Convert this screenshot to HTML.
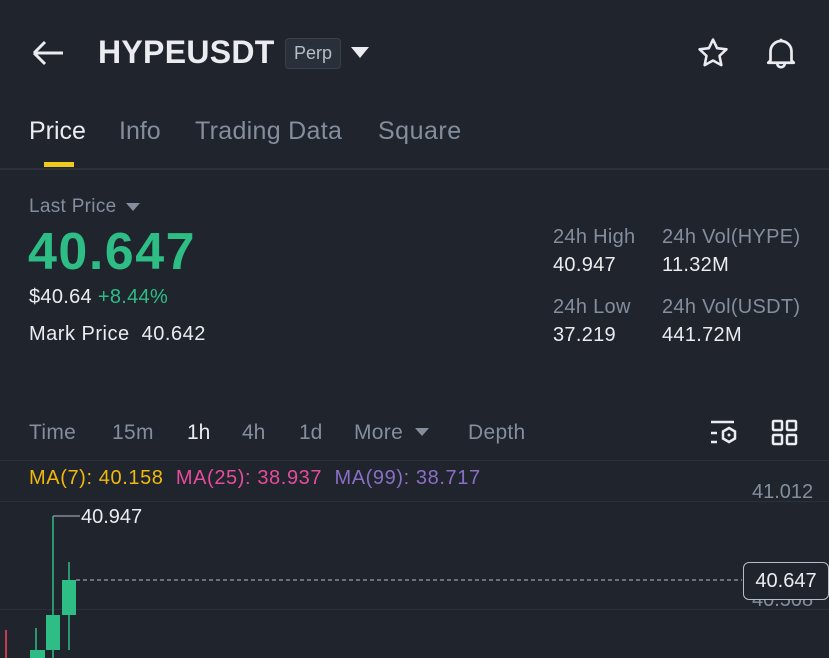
<!DOCTYPE html><html><head><style>
body{margin:0;width:829px;height:658px;overflow:hidden;background:#1f242d;font-family:"Liberation Sans",sans-serif;position:relative}
.a{position:absolute;white-space:nowrap}
.g{color:#848e9c}
.s{font-size:20px;letter-spacing:0.3px}
</style></head><body>
<svg class="a" style="left:30px;top:38px" width="36" height="30" viewBox="0 0 36 30"><path d="M4 15H33M4 15L15 4M4 15L15 26" stroke="#eaecef" stroke-width="3" fill="none"/></svg>
<div class="a" style="left:98px;top:34px;font-size:32px;font-weight:bold;color:#eaecef;letter-spacing:0.3px">HYPEUSDT</div>
<div class="a" style="left:285px;top:38px;width:54px;height:29px;border:1px solid #3a404a;border-radius:4px;background:#2a303a;color:#b7bdc6;font-size:18px;text-align:center;line-height:29px">Perp</div>
<svg class="a" style="left:350px;top:46px" width="20" height="14"><path d="M1 1H19L10 12Z" fill="#eaecef"/></svg>
<svg class="a" style="left:695px;top:36px" width="36" height="34" viewBox="0 0 24 24"><path d="M12 2.5l2.9 6.1 6.6.8-4.9 4.6 1.3 6.6L12 17.3l-5.9 3.3 1.3-6.6L2.5 9.4l6.6-.8z" stroke="#eaecef" stroke-width="1.8" fill="none" stroke-linejoin="round"/></svg>
<svg class="a" style="left:762px;top:35px" width="38" height="36" viewBox="0 0 24 24"><path d="M5 17V11a7 7 0 0114 0v6l1.5 1.5h-17zM12 2.5v1.5M9.5 19a2.5 2.5 0 005 0" stroke="#eaecef" stroke-width="1.8" fill="none" stroke-linejoin="round"/></svg>
<div class="a" style="left:29px;top:117px;font-size:25px;color:#eaecef">Price</div>
<div class="a g" style="left:119px;top:117px;font-size:25px">Info</div>
<div class="a g" style="left:195px;top:117px;font-size:25px;letter-spacing:0.3px">Trading Data</div>
<div class="a g" style="left:378px;top:117px;font-size:25px;letter-spacing:0.5px">Square</div>
<div class="a" style="left:44px;top:162px;width:30px;height:5px;background:#f0c91d"></div>
<div class="a" style="left:0;top:168px;width:829px;height:2px;background:#2b3139"></div>
<div class="a g" style="left:29px;top:196px;font-size:19px;letter-spacing:0.3px">Last Price</div>
<svg class="a" style="left:126px;top:203px" width="14" height="9"><path d="M0 0H14L7 8Z" fill="#848e9c"/></svg>
<div class="a" style="left:28px;top:222px;font-size:52px;font-weight:bold;color:#2ebd85;letter-spacing:1.5px">40.647</div>
<div class="a s" style="left:29px;top:286px;color:#eaecef">$40.64 <span style="color:#2ebd85">+8.44%</span></div>
<div class="a s" style="left:29px;top:323px;color:#eaecef;letter-spacing:0.5px">Mark Price&nbsp; 40.642</div>
<div class="a g s" style="left:553px;top:226px">24h High</div>
<div class="a s" style="left:553px;top:254px;color:#eaecef">40.947</div>
<div class="a g s" style="left:662px;top:226px">24h Vol(HYPE)</div>
<div class="a s" style="left:662px;top:254px;color:#eaecef">11.32M</div>
<div class="a g s" style="left:553px;top:296px">24h Low</div>
<div class="a s" style="left:553px;top:324px;color:#eaecef">37.219</div>
<div class="a g s" style="left:662px;top:296px">24h Vol(USDT)</div>
<div class="a s" style="left:662px;top:324px;color:#eaecef">441.72M</div>
<div class="a g" style="left:29px;top:421px;font-size:21px;letter-spacing:0.3px">Time</div>
<div class="a g" style="left:112px;top:421px;font-size:21px;letter-spacing:0.3px">15m</div>
<div class="a" style="left:187px;top:421px;font-size:21px;color:#eaecef">1h</div>
<div class="a g" style="left:242px;top:421px;font-size:21px">4h</div>
<div class="a g" style="left:299px;top:421px;font-size:21px">1d</div>
<div class="a g" style="left:354px;top:421px;font-size:21px;letter-spacing:0.3px">More</div>
<svg class="a" style="left:415px;top:428px" width="14" height="9"><path d="M0 0H14L7 8Z" fill="#848e9c"/></svg>
<div class="a g" style="left:468px;top:421px;font-size:21px;letter-spacing:0.3px">Depth</div>
<svg class="a" style="left:708px;top:418px" width="34" height="30"><path d="M3 4H26M3 15H9M3 24H9" stroke="#eaecef" stroke-width="2.5"/><path d="M21 10l6 3.5v7l-6 3.5-6-3.5v-7z" stroke="#eaecef" stroke-width="2.5" fill="none"/><circle cx="21" cy="17" r="1.5" fill="#eaecef"/></svg>
<svg class="a" style="left:771px;top:419px" width="28" height="28"><g stroke="#eaecef" stroke-width="2.5" fill="none"><rect x="2" y="2" width="9" height="9" rx="1"/><rect x="16" y="2" width="9" height="9" rx="1"/><rect x="2" y="16" width="9" height="9" rx="1"/><rect x="16" y="16" width="9" height="9" rx="1"/></g></svg>
<div class="a" style="left:0;top:460px;width:829px;height:1px;background:#2b3139"></div>
<div class="a" style="left:29px;top:467px;font-size:20px;letter-spacing:0.6px"><span style="color:#f0b90b">MA(7): 40.158</span>&nbsp; <span style="color:#e64c9c">MA(25): 38.937</span>&nbsp; <span style="color:#8a6fc4">MA(99): 38.717</span></div>
<div class="a g" style="left:752px;top:481px;font-size:20px">41.012</div>
<div class="a" style="left:0;top:501px;width:829px;height:1px;background:#2b3139"></div>
<div class="a" style="left:0;top:609px;width:829px;height:1px;background:#2b3139"></div>
<div class="a g" style="left:752px;top:589px;font-size:20px">40.508</div>
<svg class="a" style="left:0;top:500px" width="829" height="158">
<path d="M53 16H80" stroke="#b7bdc6" stroke-width="1"/>
<path d="M53 16V158M69 62V150M36 128V158" stroke="#2ebd85" stroke-width="1.5"/>
<rect x="46" y="115" width="14" height="35" fill="#2ebd85"/>
<rect x="62" y="80" width="14" height="35" fill="#2ebd85"/>
<rect x="30" y="150" width="15" height="8" fill="#2ebd85"/>
<path d="M6 130V158" stroke="#f6465d" stroke-width="1.5"/>
<path d="M76 80H742" stroke="#b7bdc6" stroke-width="1" stroke-dasharray="4 3"/>
</svg>
<div class="a" style="left:743px;top:562px;width:84px;height:36px;border:1px solid #b7bdc6;border-radius:6px;background:#1f242d;color:#eaecef;font-size:20px;text-align:center;line-height:36px">40.647</div>
<div class="a" style="left:81px;top:506px;font-size:20px;color:#eaecef">40.947</div>
</body></html>
